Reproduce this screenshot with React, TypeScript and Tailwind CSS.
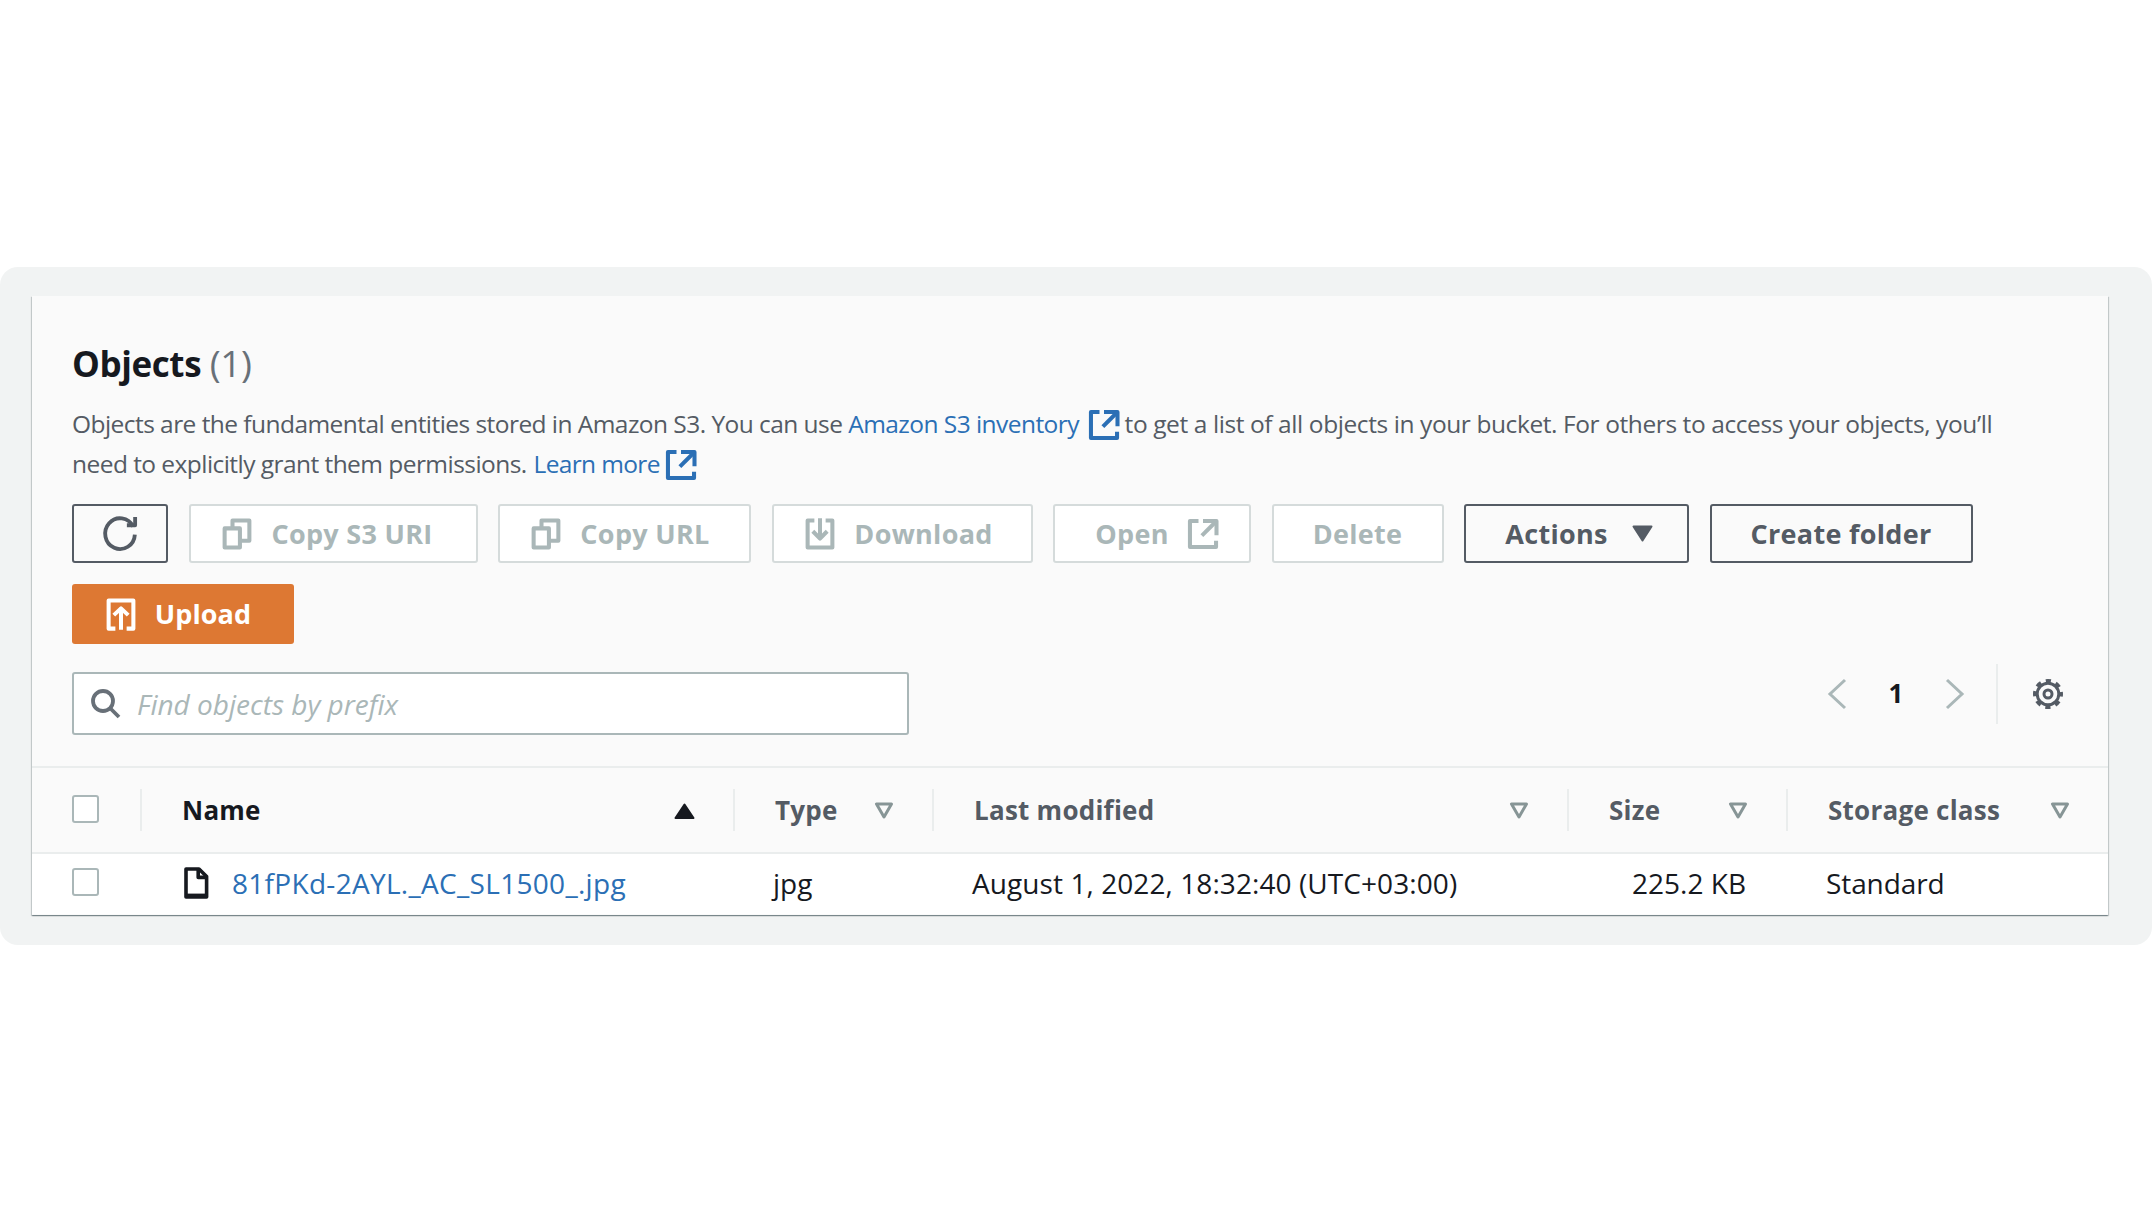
import React from "react";

const Ic = ({ size = 36, className = "", children, sw = 1.8 }: { size?: number; className?: string; children: React.ReactNode; sw?: number }) => (
  <svg width={size} height={size} viewBox="0 0 16 16" fill="none" stroke="currentColor" strokeWidth={sw} strokeLinejoin="round" className={"shrink-0 " + className}>
    {children}
  </svg>
);
const External = ({ className = "" }: { className?: string }) => (
  <Ic className={className}>
    <path d="M14 8.5V2.2H8" />
    <path d="M14 2.2 7.5 8.7" />
    <path d="M6 2.2H2.2v11.6h11.6V11" />
  </Ic>
);
const Copy = () => (
  <Ic>
    <path d="M2.5 5.5h6.8V14H2.5z" />
    <path d="M6 5V2h7.5v9h-3.7" />
  </Ic>
);
const Filter = () => (
  <svg width="20" height="17" viewBox="0 0 20 17" fill="none" stroke="#879596" strokeWidth="3" strokeLinejoin="round" className="shrink-0">
    <path d="M2.5 2h15L10 15z" />
  </svg>
);

const Btn = ({ w, active, children }: { w: string; active?: boolean; children: React.ReactNode }) => (
  <div className={`${w} h-[59px] flex items-center justify-center gap-[16px] rounded-[3px] border-2 text-[27px] leading-none font-bold tracking-[0.3px] ${active ? "border-[#545b64] text-[#545b64]" : "border-[#d5dbdb] bg-white text-[#aab7b8]"}`}>
    {children}
  </div>
);

const cols = "grid grid-cols-[108px_593px_199px_635px_219px_322px]";

const Head = ({ children, dark, filter = true, sort }: { children: string; dark?: boolean; filter?: boolean; sort?: boolean }) => (
  <div className="h-[42px] border-l-2 border-[#eaeded] pl-[40px] pt-[2px] flex items-center justify-between pr-[38px]">
    <span className={`text-[26px] font-bold tracking-[0.25px] ${dark ? "text-[#16191f]" : "text-[#545b64]"}`}>{children}</span>
    {sort ? (
      <svg width="21" height="16" viewBox="0 0 21 16" fill="#16191f" stroke="#16191f" strokeWidth="2" strokeLinejoin="round" className="shrink-0">
        <path d="M10.5 1.5 19.5 15h-18z" />
      </svg>
    ) : (
      filter && <Filter />
    )}
  </div>
);

const Check = () => <div className="w-[27px] h-[28px] rounded-[3px] border-2 border-[#aab7b8] bg-white" />;

export default function App() {
  return (
    <div className="h-[1211px] bg-white pt-[267px] font-['Open_Sans',sans-serif]">
      <div className="h-[678px] rounded-[18px] bg-[#f1f3f3] pt-[29px] pl-[32px] pr-[44px]">
        <div className="h-[619px] bg-[#fafafa] shadow-[0_1px_1px_0_rgba(0,28,36,0.3),1px_1px_1px_0_rgba(0,28,36,0.15),-1px_1px_1px_0_rgba(0,28,36,0.15)]">
          <div className="pl-[40px] pr-[41px] pt-[47px]">
            <h2 className="h-[41px] text-[35px] leading-[40px] font-bold tracking-[-0.4px] text-[#16191f]">
              Objects <span className="text-[37px] font-normal text-[#687078]">(1)</span>
            </h2>
            <p className="mt-[20px] w-[2000px] text-[24.5px] leading-[40px] tracking-[-0.55px] text-[#545b64]">
              Objects are the fundamental entities stored in Amazon S3. You can use{" "}
              <span className="text-[#2b6fb5]">Amazon S3 inventory</span>{" "}
              <External className="inline align-[-10px] ml-[1px] -mr-[3px] text-[#2b6fb5]" />{" "}
              <span className="tracking-[-0.41px]">to get a list of all objects in your bucket. For others to access your objects, you’ll</span>
              <br />
              need to explicitly grant them permissions.{" "}
              <span className="ml-[1px] tracking-[-0.65px] text-[#2b6fb5]">Learn more</span>{" "}
              <External className="inline align-[-10px] -ml-[3px] -mr-[3px] text-[#2b6fb5]" />
            </p>
            <div className="mt-[20px] flex flex-wrap gap-[20.5px] w-[1920px]">
              <Btn w="w-[96px]" active>
                <Ic size={44} sw={1.4}>
                  <path d="M10.5 4.8h3V1.8" />
                  <path d="M13.4 8.2a5.4 5.6 0 1 1-.6-2.9" />
                </Ic>
              </Btn>
              <Btn w="w-[289px] pr-[14px]"><Copy />Copy S3 URI</Btn>
              <Btn w="w-[253px] pr-[11px]"><Copy />Copy URL</Btn>
              <Btn w="w-[261px] pr-[9px]">
                <Ic>
                  <path d="M5.5 2H2.5v12h11V2h-3" />
                  <path d="M11.2 6.8 8 10 4.8 6.8" />
                  <path d="M8 10V1" />
                </Ic>
                Download
              </Btn>
              <Btn w="w-[198px] pl-[12px]">Open<External /></Btn>
              <Btn w="w-[172px]">Delete</Btn>
              <Btn w="w-[225px] pl-[5px]" active>
                Actions
                <svg width="21" height="17" viewBox="0 0 21 17" fill="#545b64" stroke="#545b64" strokeWidth="2" strokeLinejoin="round" className="shrink-0 ml-[8px]">
                  <path d="M1.5 1.5h18L10.5 15.5z" />
                </svg>
              </Btn>
              <Btn w="w-[263px]" active>Create folder</Btn>
              <div className="w-[222px] h-[60px] flex items-center justify-center gap-[16px] pr-[12px] rounded-[3px] bg-[#dd7833] text-white text-[27px] leading-none font-bold tracking-[0.1px]">
                <Ic>
                  <path d="M5.5 14.5H2.5V2h11v12.5h-3" />
                  <path d="M11.2 8.5 8 5.5 4.8 8.5" />
                  <path d="M8 6v9" />
                </Ic>
                Upload
              </div>
            </div>
            <div className="mt-[28px] h-[63px] flex items-start">
              <div className="w-[837px] h-[63px] rounded-[3px] border-2 border-[#aab7b8] bg-white flex items-center pl-[15px] gap-[16px]">
                <Ic size={32} className="text-[#687078]" sw={1.9}>
                  <circle cx="7" cy="7" r="5" />
                  <path d="m10.5 10.5 4.5 4.5" />
                </Ic>
                <span className="pt-[2px] text-[28px] italic text-[#aab7b8]">Find objects by prefix</span>
              </div>
              <div className="ml-auto h-[60px] -mt-[8px] flex items-center pr-[3px]">
                <svg width="20" height="32" viewBox="0 0 20 32" fill="none" stroke="#aab7b8" strokeWidth="3" className="shrink-0"><path d="M18 2 3 16l15 14" /></svg>
                <span className="w-[98px] text-center text-[26px] font-bold text-[#16191f]">1</span>
                <svg width="20" height="32" viewBox="0 0 20 32" fill="none" stroke="#aab7b8" strokeWidth="3" className="shrink-0"><path d="M2 2l15 14L2 30" /></svg>
                <div className="ml-[31px] h-[60px] border-l-2 border-[#eaeded]" />
                <svg width="32" height="32" viewBox="0 0 16 16" fill="none" stroke="#545b64" className="ml-[34px] shrink-0">
                  <circle cx="8" cy="8" r="2" strokeWidth="1.5" />
                  <circle cx="8" cy="8" r="5.4" strokeWidth="1.5" />
                  <circle cx="8" cy="8" r="6.6" strokeWidth="1.8" strokeDasharray="2.6 2.58" strokeDashoffset="1.3" />
                </svg>
              </div>
            </div>
          </div>
          <div className="mt-[31px] border-t-2 border-[#eaeded]">
            <div className={`${cols} h-[84px] items-center`}>
              <div className="pl-[40px] -mt-[2px]"><Check /></div>
              <Head dark sort>Name</Head>
              <Head>Type</Head>
              <Head>Last modified</Head>
              <Head>Size</Head>
              <Head>Storage class</Head>
            </div>
            <div className={`${cols} h-[62px] pb-[1px] items-center bg-white border-t-2 border-[#eaeded] text-[28px] text-[#16191f]`}>
              <div className="pl-[40px] -mt-[2px]"><Check /></div>
              <div className="pl-[43px] flex items-center gap-[23px]">
                <svg width="26" height="32" viewBox="0 0 13 16" fill="none" stroke="#16191f" strokeWidth="1.8" strokeLinejoin="round" className="shrink-0">
                  <path d="M1.5 1H8l3.8 3.8V15H1.5z" />
                  <path d="M7.6 1v4.2h4.2" />
                  <path d="M1.5 14.2h10.3" />
                </svg>
                <span className="text-[#2b6fb5] tracking-[0.3px]">81fPKd-2AYL._AC_SL1500_.jpg</span>
              </div>
              <div className="pl-[40px]">jpg</div>
              <div className="pl-[40px] tracking-[0.08px]">August 1, 2022, 18:32:40 (UTC+03:00)</div>
              <div className="pr-[40px] text-right">225.2 KB</div>
              <div className="pl-[40px] tracking-[-0.1px]">Standard</div>
            </div>
          </div>
        </div>
      </div>
    </div>
  );
}
